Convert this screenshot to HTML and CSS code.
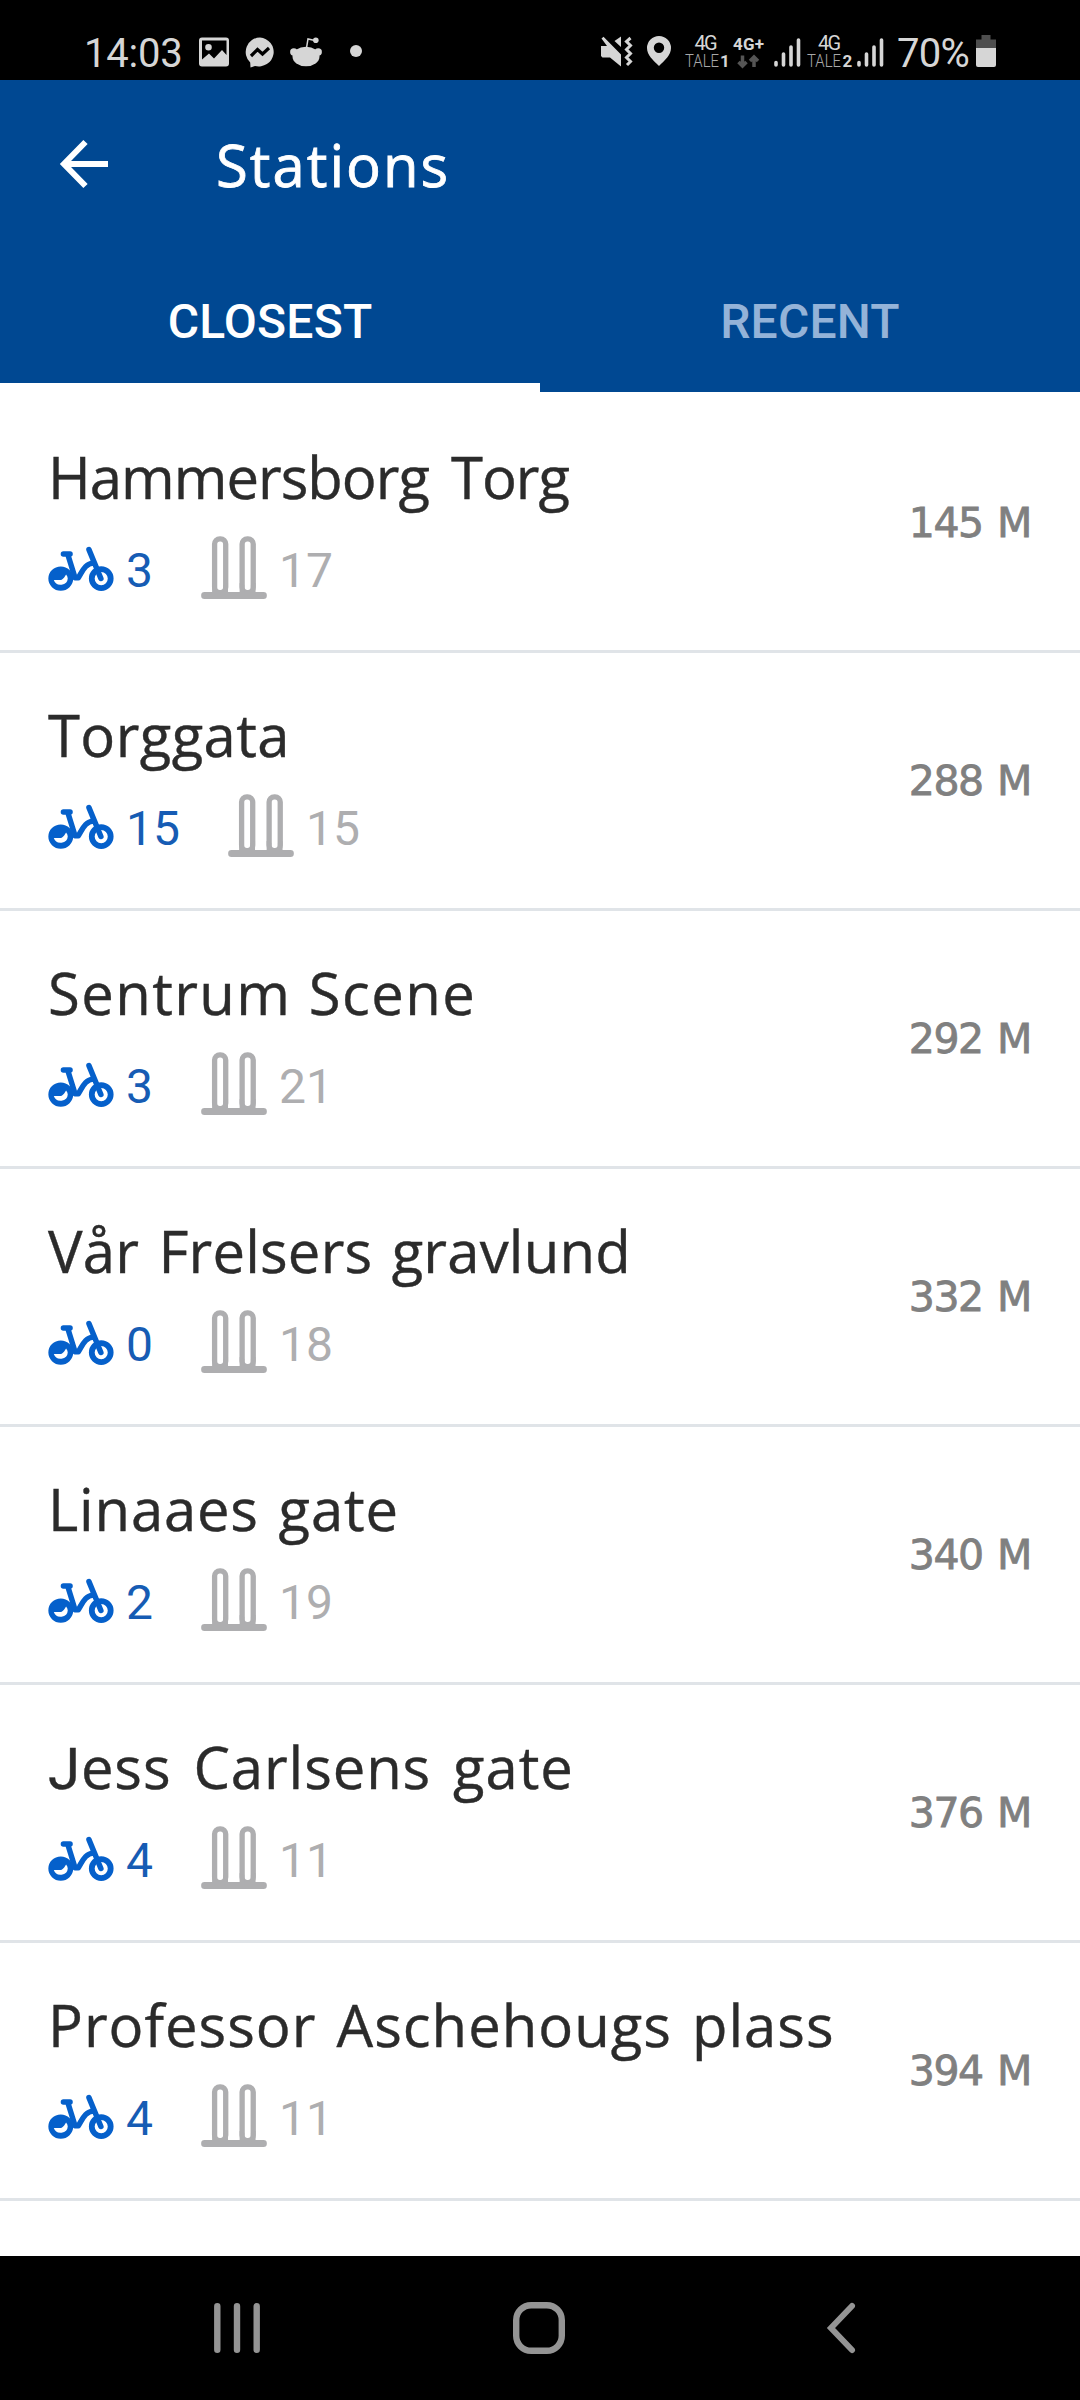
FILE: index.html
```html
<!DOCTYPE html>
<html lang="en">
<head>
<meta charset="utf-8">
<title>Stations</title>
<link rel="stylesheet" href="styles.css">
</head>
<body>
<svg class="defs" width="0" height="0">
  <symbol id="bike" viewBox="54 48 198 190">
    <path d="M54.500 176.500a37.500 36.500 0 1 1 75 0a37.500 36.500 0 1 1-75 0zM71 181a21.500 20 0 0 0 42-5q0-6-5-12c-5 8-9 17-20 17z" fill="currentColor" fill-rule="evenodd"/>
    <circle cx="214" cy="176.500" r="28.500" fill="none" stroke="currentColor" stroke-width="17.500"/>
    <path d="M100 102.500h20M113 103l22 71M177 89l36 87M136 174h9c13-20 19-42 46-45" fill="none" stroke="currentColor" stroke-width="16.500" stroke-linecap="round" stroke-linejoin="round"/>
  </symbol>
  <symbol id="dock" viewBox="513 48 198 190">
    <rect x="553.5" y="56.5" width="33.500" height="162" rx="16" fill="none" stroke="currentColor" stroke-width="16"/>
    <rect x="636.5" y="56.5" width="33.500" height="162" rx="16" fill="none" stroke="currentColor" stroke-width="16"/>
    <path d="M546 190v28h14v-22zM594 190v28h-14v-22zM629 190v28h14v-22zM677 190v28h-14v-22z" fill="currentColor"/>
    <rect x="513" y="217" width="198" height="21" rx="10" fill="currentColor"/>
  </symbol>
  <symbol id="signal" viewBox="0 0 27 30">
    <path d="M2 25.500v2.500M9.500 17v11M17 10v18M24.500 3v25" stroke="currentColor" stroke-width="3.600" stroke-linecap="round"/>
  </symbol>
</svg>

<div class="status">
  <span class="clock">14:03</span>
  <svg class="st-image" width="30" height="30" viewBox="0 0 30 30"><path fill="currentColor" fill-rule="evenodd" d="M3 .5h24a3 3 0 0 1 3 3v23a3 3 0 0 1-3 3H3a3 3 0 0 1-3-3v-23a3 3 0 0 1 3-3zM3 3.500v19l7-6 5 5 8-8.500 4.500 5V3.500zM9.500 7a3.300 3.300 0 1 1 0 6.600 3.300 3.300 0 0 1 0-6.600z"/></svg>
  <svg class="st-msg" width="30" height="31" viewBox="0 0 30 31"><path fill="currentColor" d="M15 .5a15 14.500 0 1 1-5 28.500l-4.500 1.500-.3-5A14.500 14.500 0 0 1 15 .5z"/><path d="M6 19l6.500-6.500 5 4.500 6.500-6" fill="none" stroke="#000" stroke-width="3.200"/></svg>
  <svg class="st-reddit" width="32" height="30" viewBox="0 0 32 30"><ellipse cx="16" cy="19.500" rx="13.500" ry="9.800" fill="currentColor"/><circle cx="3.800" cy="15" r="3.700" fill="currentColor"/><circle cx="28.200" cy="15" r="3.700" fill="currentColor"/><circle cx="25.800" cy="3.300" r="2.800" fill="currentColor"/><path d="M16.500 11l1.500-9 7 1.500" fill="none" stroke="currentColor" stroke-width="1.500"/></svg>
  <span class="st-dot"></span>

  <svg class="st-mute" width="31" height="31" viewBox="0 0 31 31"><path fill="currentColor" d="M0 10h6l-5.500-7.500L2.500.8 20 18.500v12L9 21.500H1.500L0 20zM20 .5v10.500l-6.500-6z"/><path d="M29.500 2l-4 3.500 4 4-4 4 4 4-4 4 4 4-3.500 3.500" fill="none" stroke="currentColor" stroke-width="3"/></svg>
  <svg class="st-pin" width="24" height="30" viewBox="0 0 24 30"><path fill="currentColor" fill-rule="evenodd" d="M12 0a12 12 0 0 1 12 12c0 7-6 12-12 18C6 24 0 19 0 12A12 12 0 0 1 12 0zm0 6.500a5.200 5.200 0 1 0 0 10.400 5.200 5.200 0 0 0 0-10.400z"/></svg>
  <svg class="st-sim" width="44" height="34" viewBox="0 0 44 34"><text x="9.500" y="15" font-size="20" textLength="23">4G</text><text class="thin" x="0" y="31.500" font-size="17.500" textLength="34" lengthAdjust="spacingAndGlyphs">TALE</text><text class="bold" x="35" y="31.500" font-size="17">1</text></svg>
  <svg class="st-data" width="31" height="34" viewBox="0 0 31 34"><text class="bold" x="0" y="15" font-size="17" textLength="31">4G+</text><path d="M9.500 20.500v10M5.500 27l4 4 4-4M21 32V22M17 26l4-4 4 4" fill="none" stroke="#555" stroke-width="3.500"/></svg>
  <svg class="st-sig1" width="27" height="30"><use href="#signal"/></svg>
  <svg class="st-sim2" width="46" height="34" viewBox="0 0 46 34"><text x="11" y="15" font-size="20" textLength="23">4G</text><text class="thin" x="0" y="31.500" font-size="17.500" textLength="34" lengthAdjust="spacingAndGlyphs">TALE</text><text class="bold" x="35.500" y="31.500" font-size="17">2</text></svg>
  <svg class="st-sig2" width="27" height="30"><use href="#signal"/></svg>
  <span class="percent">70%</span>
  <svg class="st-batt" width="20" height="32" viewBox="0 0 20 32"><path fill="#4e4e4e" d="M5.500 0h9v4.500H20V14H0V4.500h5.500z"/><path fill="currentColor" d="M0 13h20v17a2 2 0 0 1-2 2H2a2 2 0 0 1-2-2z"/></svg>
</div>

<header class="header">
  <div class="toolbar">
    <svg class="back" width="48" height="48" viewBox="0 0 48 48"><path d="M48 24H6M25.500 2L4 24l21.500 22" fill="none" stroke="currentColor" stroke-width="6"/></svg>
    <h1 class="title">Stations</h1>
  </div>
  <nav class="tabs">
    <div class="tab active">CLOSEST</div>
    <div class="tab recent">RECENT</div>
  </nav>
</header>

<main class="list">
  <div class="row"><div><div class="name n1">Hammersborg Torg</div><div class="counts"><svg class="ic bike"><use href="#bike"/></svg><span class="bikes">3</span><svg class="ic dock"><use href="#dock"/></svg><span class="docks">17</span></div></div><div class="dist">145 M</div></div>
  <div class="row"><div><div class="name n2">Torggata</div><div class="counts"><svg class="ic bike"><use href="#bike"/></svg><span class="bikes">15</span><svg class="ic dock"><use href="#dock"/></svg><span class="docks">15</span></div></div><div class="dist">288 M</div></div>
  <div class="row"><div><div class="name n3">Sentrum Scene</div><div class="counts"><svg class="ic bike"><use href="#bike"/></svg><span class="bikes">3</span><svg class="ic dock"><use href="#dock"/></svg><span class="docks">21</span></div></div><div class="dist">292 M</div></div>
  <div class="row"><div><div class="name n4">Vår Frelsers gravlund</div><div class="counts"><svg class="ic bike"><use href="#bike"/></svg><span class="bikes">0</span><svg class="ic dock"><use href="#dock"/></svg><span class="docks">18</span></div></div><div class="dist">332 M</div></div>
  <div class="row"><div><div class="name n5">Linaaes gate</div><div class="counts"><svg class="ic bike"><use href="#bike"/></svg><span class="bikes">2</span><svg class="ic dock"><use href="#dock"/></svg><span class="docks">19</span></div></div><div class="dist">340 M</div></div>
  <div class="row"><div><div class="name n6"><span class="cap-j">J</span>ess Carlsens gate</div><div class="counts"><svg class="ic bike"><use href="#bike"/></svg><span class="bikes">4</span><svg class="ic dock"><use href="#dock"/></svg><span class="docks">11</span></div></div><div class="dist">376 M</div></div>
  <div class="row"><div><div class="name n7">Professor Aschehougs plass</div><div class="counts"><svg class="ic bike"><use href="#bike"/></svg><span class="bikes">4</span><svg class="ic dock"><use href="#dock"/></svg><span class="docks">11</span></div></div><div class="dist">394 M</div></div>
</main>

<footer class="navbar">
  <div class="key"><svg width="46" height="50" viewBox="0 0 46 50"><path d="M3.300 3.300v43.400M23 3.300v43.400M42.700 3.300v43.400" stroke="currentColor" stroke-width="6.400" stroke-linecap="round"/></svg></div>
  <div class="key"><svg width="52" height="52" viewBox="0 0 52 52"><rect x="3.200" y="3.200" width="45.600" height="45.600" rx="15" fill="none" stroke="currentColor" stroke-width="6.400"/></svg></div>
  <div class="key"><svg width="28" height="50" viewBox="0 0 28 50"><path d="M25 3L4 25l21 22" fill="none" stroke="currentColor" stroke-width="6" stroke-linecap="round"/></svg></div>
</footer>
</body>
</html>
```
FILE: styles.css
```css
* { box-sizing: border-box; }
body { margin: 0; width: 1080px; height: 2400px; display: flex; flex-direction: column; background: #fff; font-family: Roboto, sans-serif; overflow: hidden; }
svg { display: block; flex: none; overflow: visible; }
.defs { display: none; }

.status { height: 80px; flex: none; background: #000; color: #d6d6d6; display: flex; align-items: flex-start; padding: 35px 0 0 84px; }
.clock, .percent { font-size: 40px; line-height: 40px; margin-top: -1px; white-space: nowrap; }
.clock { width: 115px; letter-spacing: -.2px; }
.st-image { margin-top: 2px; }
.st-msg { margin: 2px 0 0 16px; }
.st-reddit { margin: 2px 0 0 15px; }
.st-dot { width: 12px; height: 12px; border-radius: 50%; background: #d6d6d6; margin: 10px 0 0 28px; }
.st-mute { margin: 1px 0 0 239px; }
.st-pin { margin: 1px 0 0 15px; }
.st-sim { margin-left: 14px; }
.st-data { margin-left: 4px; }
.st-sig1 { margin: 2px 0 0 10px; }
.st-sim2 { margin-left: 6px; }
.st-sig2 { margin: 2px 0 0 4px; }
.percent { margin-left: 13px; width: 79px; letter-spacing: -.7px; }
.status text { fill: #d6d6d6; font-family: Roboto, sans-serif; }
.status .thin { font-weight: 300; fill: #a8a8a8; }
.status .bold { font-weight: 700; }

.header { height: 312px; flex: none; background: #004892; color: #fff; margin-bottom: 3px; }
.toolbar { height: 168px; display: flex; align-items: center; padding-left: 60px; }
.title { margin: 0 0 0 108px; font: 400 58px/79px "Open Sans", sans-serif; letter-spacing: 2px; -webkit-text-stroke: .8px #fff; }
.tabs { height: 144px; display: flex; }
.tab { width: 540px; font-size: 48px; font-weight: 500; line-height: 147px; height: 144px; text-align: center; letter-spacing: .2px; }
.active { border-bottom: 9px solid #fff; }
.recent { color: #94b3d8; }

.row { height: 258px; border-bottom: 3px solid #e0e4e8; display: flex; justify-content: space-between; padding: 42px 48px 0; }
.name { font: 400 58px/79px "Open Sans", sans-serif; color: #2b2b2b; white-space: nowrap; height: 79px; word-spacing: 7px; -webkit-text-stroke: .4px #2b2b2b; }
.n1 { letter-spacing: -1px; word-spacing: 8px; }
.n2 { letter-spacing: .4px; }
.n3 { letter-spacing: 1.4px; word-spacing: 1px; }
.n4 { letter-spacing: .2px; word-spacing: 4px; }
.n5 { letter-spacing: .8px; word-spacing: 4px; }
.n6 { letter-spacing: .9px; word-spacing: 6px; }
.n7 { letter-spacing: 1px; word-spacing: 4px; }
.cap-j { font-family: Roboto, sans-serif; }
.counts { display: flex; align-items: flex-start; height: 63px; margin-top: 20px; font-size: 48px; line-height: 69px; color: #aeaeb0; }
.ic { width: 66px; height: 63px; }
.bike { color: #0560cb; }
.bikes { color: #165cb4; margin: 0 48px 0 12px; }
.docks { margin-left: 12px; }
.dist { font: 400 41px/60px "DejaVu Sans", sans-serif; color: #808080; -webkit-text-stroke: .8px #808080; letter-spacing: -1.5px; word-spacing: 3px; margin: 56px 1px 0 0; white-space: nowrap; }

.navbar { height: 144px; margin-top: auto; flex: none; background: #000; color: #949494; display: flex; padding-left: 86px; }
.key { width: 302px; display: flex; align-items: center; justify-content: center; }
```
